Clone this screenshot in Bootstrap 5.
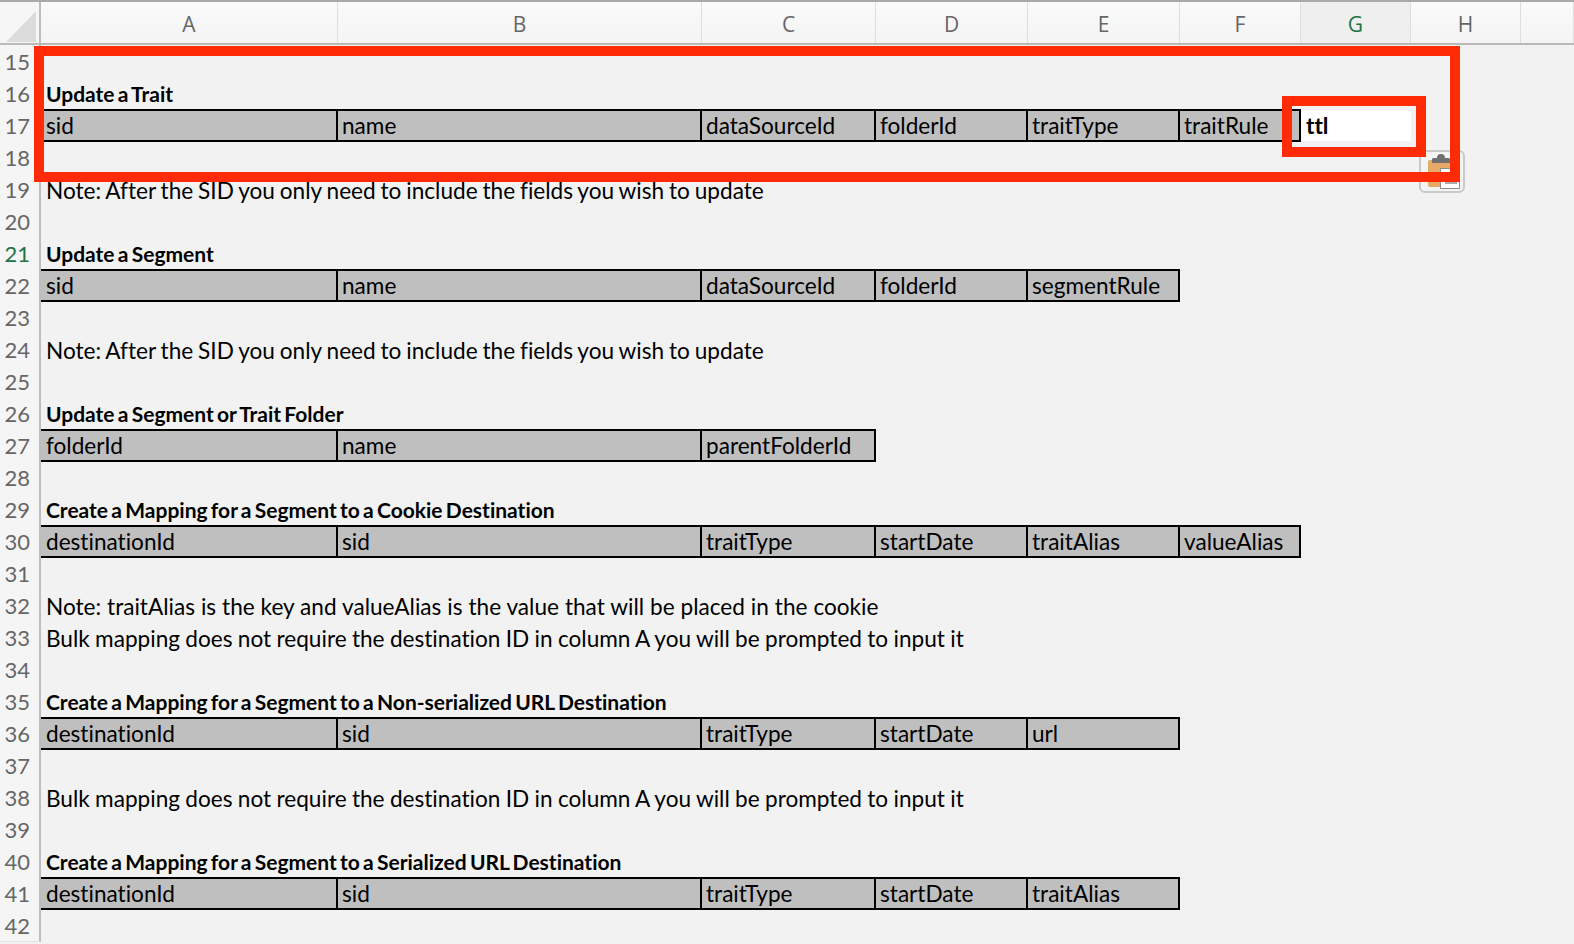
<!DOCTYPE html>
<html lang="en">
<head>
<meta charset="utf-8">
<title>Sheet</title>
<link href="https://cdn.jsdelivr.net/npm/bootstrap@5.3.0/dist/css/bootstrap.min.css" rel="stylesheet">
<style>
html,body{height:944px;overflow:hidden;background:#f2f2f2;}
body{font-family:"Lato","Liberation Sans",sans-serif;color:#000;font-variant-ligatures:none;}
.sheet{position:relative;width:1574px;height:944px;overflow:hidden;}
.sgrid{display:grid;grid-template-columns:41px 297px 364px 174px 152px 152px 121px 110px 110px 53px;}
.hdr{margin-top:2px;height:43px;border-bottom:2px solid #b9b9b9;background:#f8f8f8;box-shadow:0 -2px 0 #a9a9a9;color:#666;}
.hdr>div{display:flex;align-items:center;justify-content:center;padding-top:4px;border-right:1px solid #dedede;background:linear-gradient(#fafafa,#f4f4f4);font-family:"Open Sans","Liberation Sans",sans-serif;font-size:21px;}
.hdr>.corner{border-right:2px solid #bdbdbd;position:relative;background:#f6f6f6;}
.corner svg{position:absolute;left:5px;top:8px;}
.hdr>.sel{color:#217346;background:#efefef;}
.srow{height:32px;line-height:30px;font-size:22.6px;}
.rnum{border-right:2px solid #bdbdbd;border-bottom:1px solid #e2e2e2;background:#f5f5f5;color:#666;text-align:right;padding-right:9px;padding-top:2px;font-size:22px;white-space:nowrap;}
.rnum.act{color:#217346;}
.cellx{padding-left:5px;white-space:nowrap;min-width:0;}
.note{padding-top:3px;word-spacing:-.45px;}
.note-sid{word-spacing:-.9px;}
.note-alias{word-spacing:.15px;}
.bold{font-weight:700;font-size:21px;word-spacing:-1.85px;line-height:32px;padding-top:1px;}
.gc{background:#bfbfbf;border-top:2px solid #000;border-bottom:2px solid #000;border-right:2px solid #000;line-height:28px;padding-top:1px;padding-left:4px;}
.gc:nth-child(2){padding-left:5px;}
.wc{background:#fff;font-weight:700;margin:1px 0;line-height:28px;padding-top:2px;}
.redbox{position:absolute;border:10px solid #ff2a06;}
.rb1{left:34px;top:46px;width:1426px;height:136px;}
.rb2{left:1282px;top:96px;width:144px;height:61px;}
.pastebtn{position:absolute;left:1419px;top:150px;width:46px;height:43px;border:2px solid #c9c9c9;border-radius:6px;background:#f4f4f4;}
.pastebtn svg{display:block;}
</style>
</head>
<body>
<div class="sheet">
<div class="sgrid hdr"><div class="corner"><svg width="32" height="32" viewBox="0 0 32 32"><polygon points="31,1 31,32 1,32" fill="#dcdcdc"/></svg></div><div>A</div><div>B</div><div>C</div><div>D</div><div>E</div><div>F</div><div class="sel">G</div><div>H</div><div></div></div>

<div class="sgrid srow"><div class="rnum">15</div></div>
<div class="sgrid srow"><div class="rnum">16</div><div class="cellx bold">Update a Trait</div></div>
<div class="sgrid srow"><div class="rnum">17</div><div class="cellx gc">sid</div><div class="cellx gc">name</div><div class="cellx gc">dataSourceId</div><div class="cellx gc">folderId</div><div class="cellx gc">traitType</div><div class="cellx gc">traitRule</div><div class="cellx wc">ttl</div></div>
<div class="sgrid srow"><div class="rnum">18</div></div>
<div class="sgrid srow"><div class="rnum">19</div><div class="cellx note note-sid">Note: After the SID you only need to include the fields you wish to update</div></div>
<div class="sgrid srow"><div class="rnum">20</div></div>
<div class="sgrid srow"><div class="rnum act">21</div><div class="cellx bold">Update a Segment</div></div>
<div class="sgrid srow"><div class="rnum">22</div><div class="cellx gc">sid</div><div class="cellx gc">name</div><div class="cellx gc">dataSourceId</div><div class="cellx gc">folderId</div><div class="cellx gc">segmentRule</div></div>
<div class="sgrid srow"><div class="rnum">23</div></div>
<div class="sgrid srow"><div class="rnum">24</div><div class="cellx note note-sid">Note: After the SID you only need to include the fields you wish to update</div></div>
<div class="sgrid srow"><div class="rnum">25</div></div>
<div class="sgrid srow"><div class="rnum">26</div><div class="cellx bold">Update a Segment or Trait Folder</div></div>
<div class="sgrid srow"><div class="rnum">27</div><div class="cellx gc">folderId</div><div class="cellx gc">name</div><div class="cellx gc">parentFolderId</div></div>
<div class="sgrid srow"><div class="rnum">28</div></div>
<div class="sgrid srow"><div class="rnum">29</div><div class="cellx bold">Create a Mapping for a Segment to a Cookie Destination</div></div>
<div class="sgrid srow"><div class="rnum">30</div><div class="cellx gc">destinationId</div><div class="cellx gc">sid</div><div class="cellx gc">traitType</div><div class="cellx gc">startDate</div><div class="cellx gc">traitAlias</div><div class="cellx gc">valueAlias</div></div>
<div class="sgrid srow"><div class="rnum">31</div></div>
<div class="sgrid srow"><div class="rnum">32</div><div class="cellx note note-alias">Note: traitAlias is the key and valueAlias is the value that will be placed in the cookie</div></div>
<div class="sgrid srow"><div class="rnum">33</div><div class="cellx note">Bulk mapping does not require the destination ID in column A you will be prompted to input it</div></div>
<div class="sgrid srow"><div class="rnum">34</div></div>
<div class="sgrid srow"><div class="rnum">35</div><div class="cellx bold">Create a Mapping for a Segment to a Non-serialized URL Destination</div></div>
<div class="sgrid srow"><div class="rnum">36</div><div class="cellx gc">destinationId</div><div class="cellx gc">sid</div><div class="cellx gc">traitType</div><div class="cellx gc">startDate</div><div class="cellx gc">url</div></div>
<div class="sgrid srow"><div class="rnum">37</div></div>
<div class="sgrid srow"><div class="rnum">38</div><div class="cellx note">Bulk mapping does not require the destination ID in column A you will be prompted to input it</div></div>
<div class="sgrid srow"><div class="rnum">39</div></div>
<div class="sgrid srow"><div class="rnum">40</div><div class="cellx bold">Create a Mapping for a Segment to a Serialized URL Destination</div></div>
<div class="sgrid srow"><div class="rnum">41</div><div class="cellx gc">destinationId</div><div class="cellx gc">sid</div><div class="cellx gc">traitType</div><div class="cellx gc">startDate</div><div class="cellx gc">traitAlias</div></div>
<div class="sgrid srow"><div class="rnum">42</div></div>

<div class="pastebtn"><svg width="42" height="39" viewBox="0 0 42 39"><rect x="7" y="8" width="22" height="27" rx="2" fill="#e8ab66"/><path d="M11 11V7q0-1 2-1h3a4 4 0 0 1 8 0h3q2 0 2 1v4z" fill="#6f6f6f"/><rect x="19.5" y="16.5" width="19" height="20" fill="#fff" stroke="#8f8f8f"/><path d="M24 31h12" stroke="#aaa" stroke-width="2"/></svg></div>
<div class="redbox rb1"></div>
<div class="redbox rb2"></div>
</div>
<script src="https://cdn.jsdelivr.net/npm/bootstrap@5.3.0/dist/js/bootstrap.bundle.min.js"></script>
</body>
</html>
